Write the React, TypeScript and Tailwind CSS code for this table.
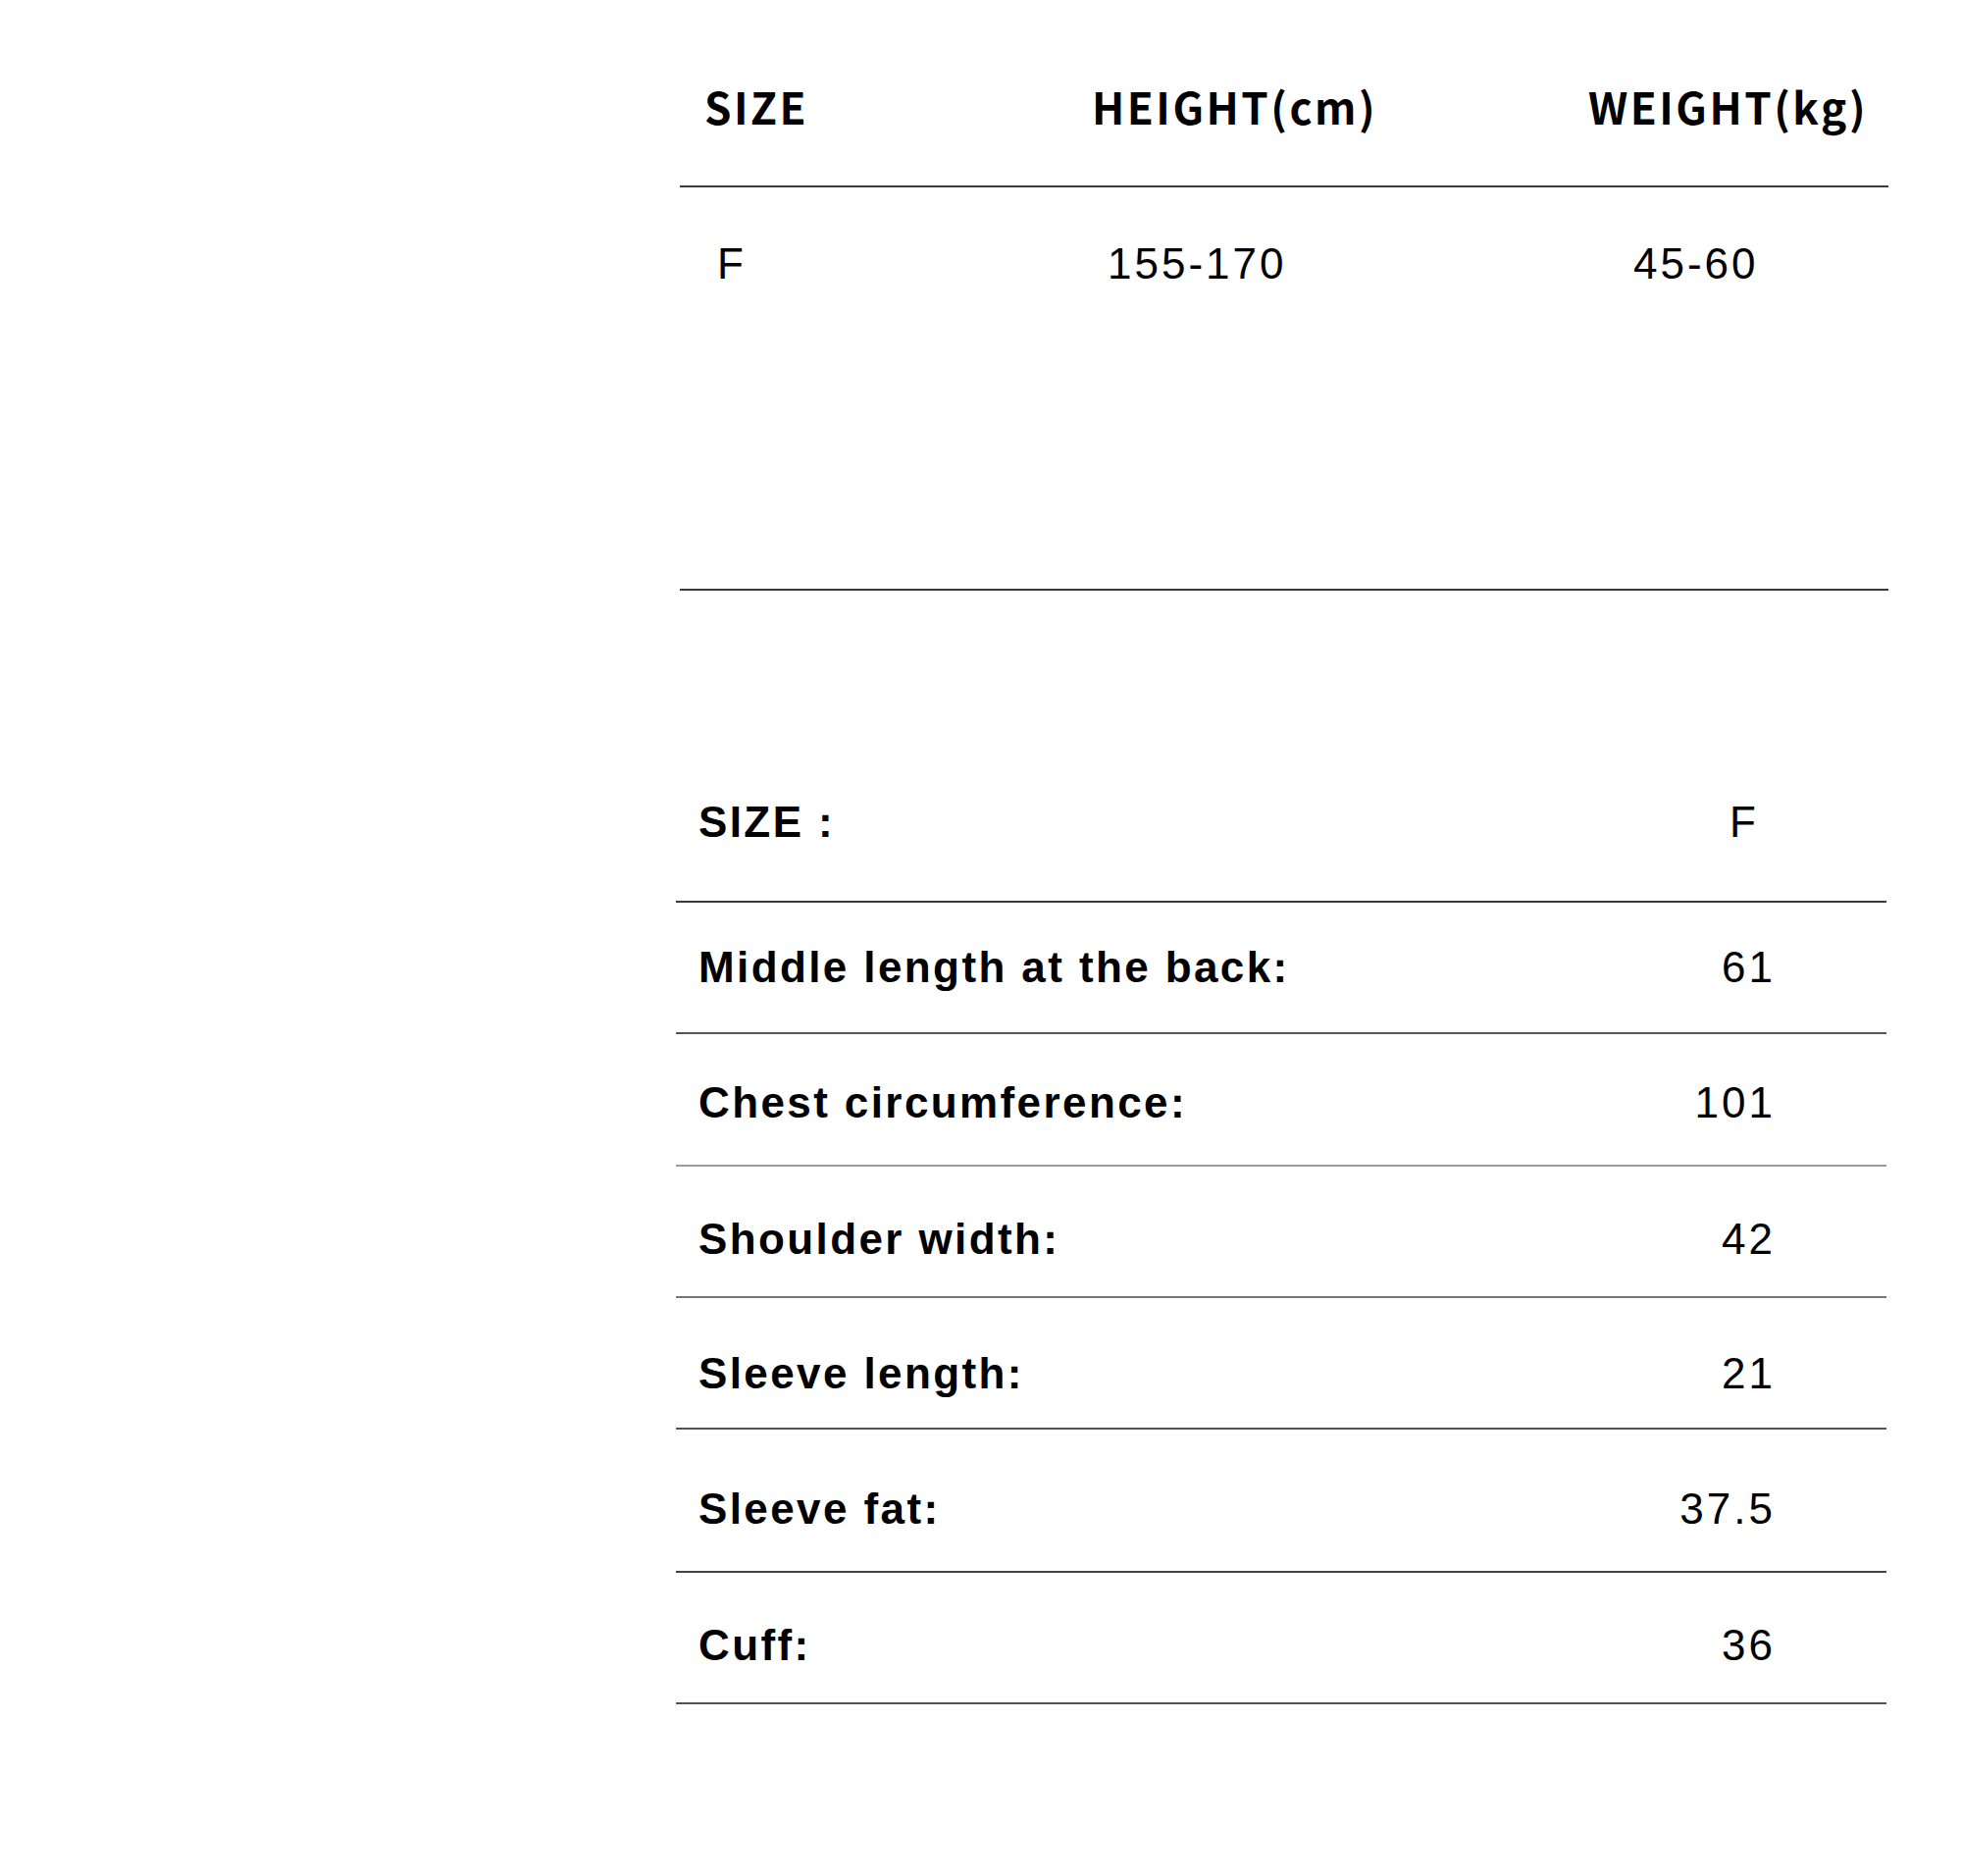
import * as React from "react";

interface MeasureRow {
  label: string;
  value: string;
  height: string;
  padTop: string;
  lineColor: string;
}

const rows: MeasureRow[] = [
  { label: "Middle length at the back:", value: "61", height: "h-[134px]", padTop: "pt-[41px]", lineColor: "border-[#555555]" },
  { label: "Chest circumference:", value: "101", height: "h-[135px]", padTop: "pt-[45px]", lineColor: "border-[#9a9a9a]" },
  { label: "Shoulder width:", value: "42", height: "h-[134px]", padTop: "pt-[49px]", lineColor: "border-[#777777]" },
  { label: "Sleeve length:", value: "21", height: "h-[134px]", padTop: "pt-[52px]", lineColor: "border-[#555555]" },
  { label: "Sleeve fat:", value: "37.5", height: "h-[146px]", padTop: "pt-[56px]", lineColor: "border-[#444444]" },
  { label: "Cuff:", value: "36", height: "h-[134px]", padTop: "pt-[49px]", lineColor: "border-[#555555]" },
];

const headFont = "font-['Noto_Sans_CJK_SC','Noto_Sans',sans-serif]";
const armFont = "font-['Liberation_Sans',Arial,sans-serif]";

export default function App() {
  return (
    <div className="w-[2000px] h-[1912px] bg-white text-black">
      {/* height / weight table */}
      <div className="ml-[693px] w-[1232px]">
        <div
          className={`flex h-[191px] pt-[83px] border-b-2 border-[#3a3a3a] ${headFont} font-bold text-[44px] leading-[50px] tracking-[2.5px]`}
        >
          <div className="w-[420px] pl-[25px]">SIZE</div>
          <div className="w-[506px]">HEIGHT(cm)</div>
          <div className="flex-1">WEIGHT(kg)</div>
        </div>
        <div
          className={`flex h-[411px] pt-[53px] border-b-2 border-[#3a3a3a] ${armFont} text-[44px] leading-[50px] tracking-[3px]`}
        >
          <div className="w-[436px] pl-[38px]">F</div>
          <div className="w-[536px]">155-170</div>
          <div className="flex-1">45-60</div>
        </div>
      </div>

      {/* garment measurements */}
      <div className={`mt-[156px] ml-[689px] w-[1234px] ${armFont} text-[44px] leading-[50px]`}>
        <div className="flex justify-between h-[162px] pt-[55px] border-b-2 border-[#3a3a3a]">
          <span className="pl-[23px] font-bold tracking-[2.4px]">SIZE :</span>
          <span className="pr-[130px] tracking-[3px]">F</span>
        </div>
        {rows.map((r) => (
          <div
            key={r.label}
            className={`flex justify-between border-b-2 ${r.height} ${r.padTop} ${r.lineColor}`}
          >
            <span className="pl-[23px] font-bold tracking-[2.4px]">{r.label}</span>
            <span className="pr-[113px] tracking-[3px]">{r.value}</span>
          </div>
        ))}
      </div>
    </div>
  );
}
